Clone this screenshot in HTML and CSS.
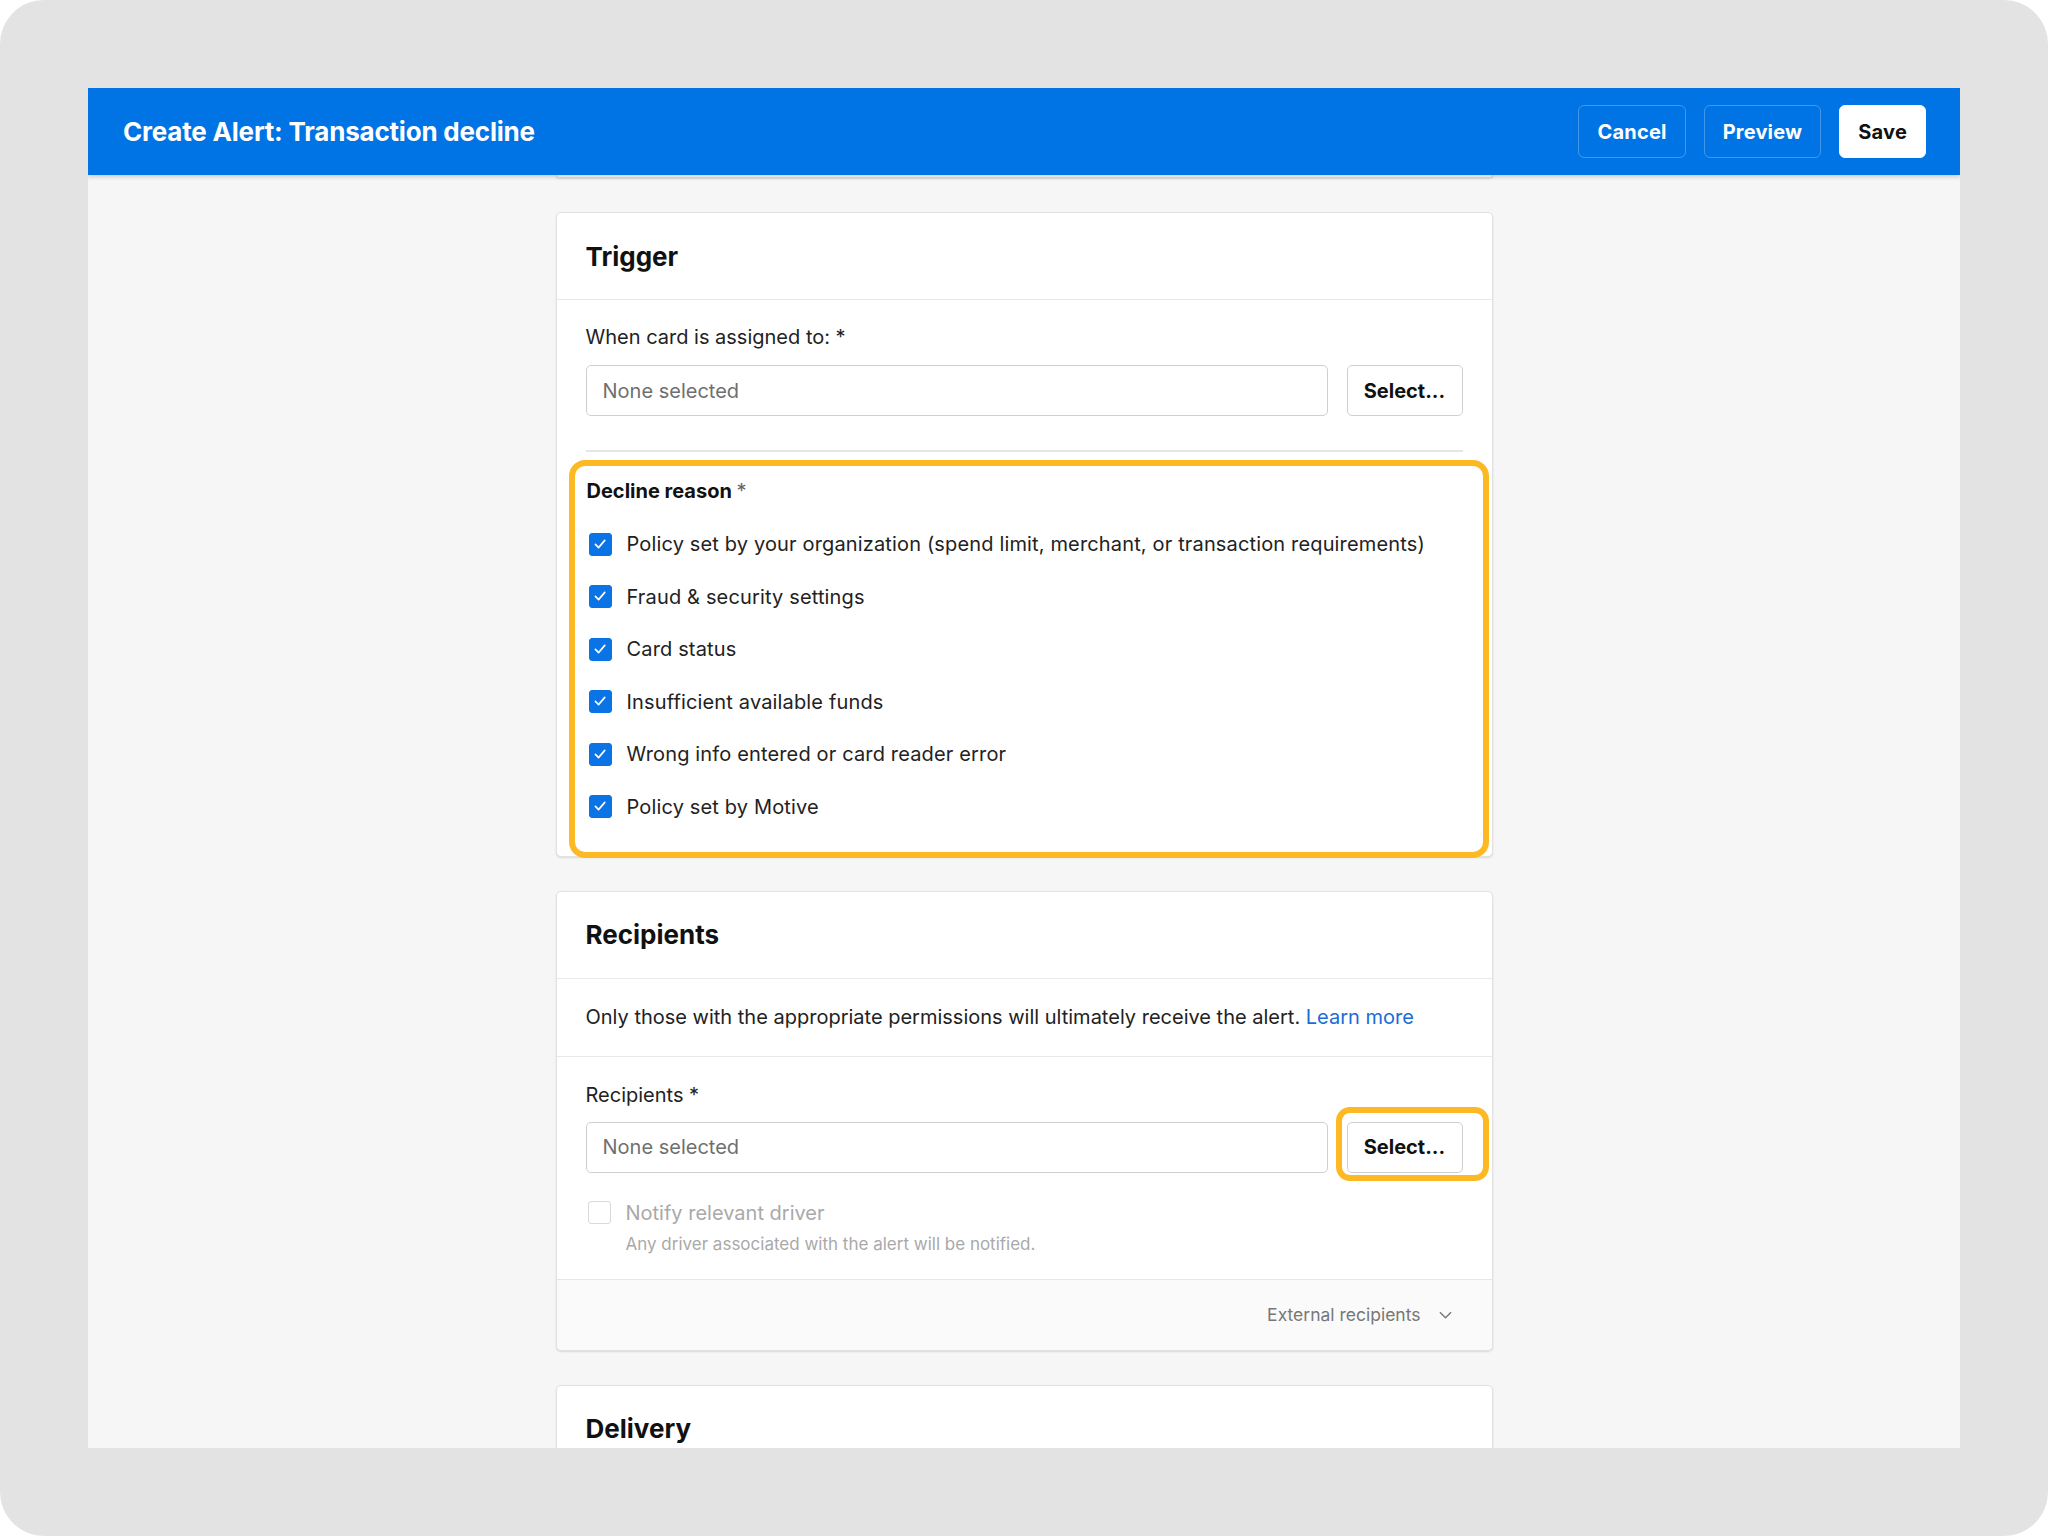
FILE: index.html
```html
<!DOCTYPE html>
<html lang="en">
<head>
    <meta charset="UTF-8">
    <title>Create Alert: Transaction decline</title>
    <link rel="stylesheet" href="styles.css">
</head>
<body>
<div class="device">
    <div class="app">
        <header class="topbar">
            <h1>Create Alert: Transaction decline</h1>
            <div class="actions">
                <button class="btn-ghost">Cancel</button>
                <button class="btn-ghost">Preview</button>
                <button class="btn-save">Save</button>
            </div>
        </header>

        <main class="content">
            <div class="cards">
                <!-- end of the section scrolled up under the top bar -->
                <div class="card-tail"></div>

                <section class="card">
                    <div class="card-head"><h2>Trigger</h2></div>
                    <div class="card-body trigger-body">
                        <label class="field-label">When card is assigned to: *</label>
                        <div class="picker">
                            <div class="picker-input">None selected</div>
                            <button class="btn-select">Select...</button>
                        </div>
                        <hr class="rule">
                        <div class="reasons">
                            <div class="reasons-title">Decline reason <span class="req">*</span></div>
                            <ul class="checks">
                                <li><span class="box checked"><svg viewBox="0 0 24 24"><path d="M6.5 12.5l3.8 3.8 7.4-8.6"/></svg></span>Policy set by your organization (spend limit, merchant, or transaction requirements)</li>
                                <li><span class="box checked"><svg viewBox="0 0 24 24"><path d="M6.5 12.5l3.8 3.8 7.4-8.6"/></svg></span>Fraud &amp; security settings</li>
                                <li><span class="box checked"><svg viewBox="0 0 24 24"><path d="M6.5 12.5l3.8 3.8 7.4-8.6"/></svg></span>Card status</li>
                                <li><span class="box checked"><svg viewBox="0 0 24 24"><path d="M6.5 12.5l3.8 3.8 7.4-8.6"/></svg></span>Insufficient available funds</li>
                                <li><span class="box checked"><svg viewBox="0 0 24 24"><path d="M6.5 12.5l3.8 3.8 7.4-8.6"/></svg></span>Wrong info entered or card reader error</li>
                                <li><span class="box checked"><svg viewBox="0 0 24 24"><path d="M6.5 12.5l3.8 3.8 7.4-8.6"/></svg></span>Policy set by Motive</li>
                            </ul>
                        </div>
                    </div>
                </section>

                <section class="card">
                    <div class="card-head"><h2>Recipients</h2></div>
                    <div class="card-note">
                        Only those with the appropriate permissions will ultimately receive the alert.&nbsp;<a href="#">Learn more</a>
                    </div>
                    <div class="card-body recipients-body">
                        <label class="field-label">Recipients *</label>
                        <div class="picker">
                            <div class="picker-input">None selected</div>
                            <div class="select-wrap">
                                <button class="btn-select">Select...</button>
                            </div>
                        </div>
                        <div class="notify">
                            <span class="box"></span>Notify relevant driver
                        </div>
                        <div class="notify-help">Any driver associated with the alert will be notified.</div>
                    </div>
                    <div class="card-foot">
                        External recipients
                        <svg class="chevron" viewBox="0 0 14 8"><path d="M1 1l6 6 6-6"/></svg>
                    </div>
                </section>

                <section class="card">
                    <div class="card-head"><h2>Delivery</h2></div>
                    <div class="card-body delivery-body"></div>
                </section>
            </div>
        </main>
    </div>
</div>
</body>
</html>
```

FILE: styles.css
```css
html {
    background: #fff;
    font-family: Inter, "Liberation Sans", sans-serif;
    color: #1f1f1f;
}

body {
    margin: 0;
}

.device {
    width: 2048px;
    height: 1536px;
    box-sizing: border-box;
    padding: 88px;
    background: #e3e3e3;
    border-radius: 44px;
}

.app {
    height: 1360px;
    display: flex;
    flex-direction: column;
    background: #f6f6f6;
    overflow: hidden;
}

/* top bar */

.topbar {
    height: 87px;
    flex: none;
    display: flex;
    align-items: center;
    justify-content: space-between;
    padding: 0 34px 0 35px;
    background: #0074e4;
    box-shadow: 0 2px 4px rgba(0, 0, 0, 0.18);
    position: relative;
    z-index: 2;
}

.topbar h1 {
    margin: 0;
    font-size: 26px;
    font-weight: 700;
    color: #fff;
    letter-spacing: -0.2px;
}

.actions {
    display: flex;
    gap: 18px;
}

.actions button {
    height: 53px;
    padding: 0 18px;
    border-radius: 6px;
    font-family: inherit;
    font-size: 20px;
    font-weight: 700;
    letter-spacing: 0.2px;
}

.btn-ghost {
    background: transparent;
    color: #fff;
    border: 1px solid rgba(255, 255, 255, 0.25);
}

.btn-save {
    background: #fff;
    color: #111;
    border: 1px solid #fff;
}

/* content */

.content {
    flex: 1;
    overflow: hidden;
}

.cards {
    width: 937px;
    margin: 0 auto;
    display: flex;
    flex-direction: column;
    gap: 34px;
}

.card-tail {
    height: 2px;
    background: #fff;
    border: 1px solid #e0e0e0;
    border-top: none;
    border-radius: 0 0 5px 5px;
    box-shadow: 0 1px 2px rgba(0, 0, 0, 0.12);
}

.card {
    background: #fff;
    border: 1px solid #e2e2e2;
    border-radius: 5px;
    box-shadow: 0 1px 2px rgba(0, 0, 0, 0.12);
}

.card-head {
    height: 86px;
    display: flex;
    align-items: center;
    padding: 0 29px;
    border-bottom: 1px solid #e9e9e9;
}

.card-head h2 {
    margin: 0;
    font-size: 26px;
    font-weight: 700;
    color: #111;
}

.card-body {
    padding: 23px 29px 24px 29px;
}

.field-label {
    display: block;
    font-size: 20px;
    line-height: 28px;
    color: #222;
    margin-bottom: 14px;
}

.picker {
    display: flex;
    gap: 19px;
}

.picker-input {
    flex: 1;
    height: 49px;
    display: flex;
    align-items: center;
    padding: 0 16px;
    border: 1px solid #cfcfcf;
    border-radius: 5px;
    font-size: 20px;
    color: #6f6f6f;
}

.btn-select {
    width: 116px;
    height: 51px;
    background: #fff;
    border: 1px solid #cfcfcf;
    border-radius: 5px;
    font-family: inherit;
    font-size: 20px;
    font-weight: 700;
    color: #111;
}

.rule {
    margin: 34px 0 0;
    border: none;
    height: 2px;
    background: #e6e6e6;
}

/* decline reasons, ringed in yellow */

.trigger-body {
    padding-bottom: 0;
}

.reasons {
    margin: 8px -26px -2px -17px;
    padding: 11px 20px 31px 12px;
    border: 6px solid #fdb924;
    border-radius: 16px;
    position: relative;
}

.reasons-title {
    font-size: 20px;
    line-height: 28px;
    font-weight: 700;
    color: #111;
}

.req {
    font-weight: 400;
    color: #666;
}

.checks {
    list-style: none;
    margin: 25px 0 0;
    padding: 0;
    display: flex;
    flex-direction: column;
    gap: 24.6px;
}

.checks li,
.notify {
    display: flex;
    align-items: center;
    font-size: 20px;
    line-height: 28px;
    color: #222;
}

.checks li {
    letter-spacing: 0.15px;
}

.box {
    width: 23px;
    height: 23px;
    box-sizing: border-box;
    margin: 0 15px 0 2px;
    border-radius: 3px;
    border: 1.5px solid #d9d9d9;
    flex: none;
}

.box.checked {
    background: #0a73e6;
    border-color: #0a73e6;
}

.box svg {
    display: block;
    width: 20px;
    height: 20px;
    fill: none;
    stroke: #fff;
    stroke-width: 2;
    stroke-linecap: round;
    stroke-linejoin: round;
}

/* recipients */

.card-note {
    height: 77px;
    display: flex;
    align-items: center;
    padding: 0 29px;
    border-bottom: 1px solid #e9e9e9;
    font-size: 20px;
    color: #222;
}

.card-note a {
    color: #1a6cd8;
    text-decoration: none;
}

.recipients-body {
    padding-top: 24px;
}

.recipients-body .field-label {
    margin-bottom: 13px;
}

.select-wrap {
    position: relative;
}

.select-wrap::after {
    content: "";
    position: absolute;
    top: -15px;
    bottom: -8px;
    left: -11px;
    right: -26px;
    border: 6px solid #fdb924;
    border-radius: 14px;
}

.notify {
    margin-top: 26px;
    color: #a9a9a9;
}

.notify-help {
    margin: 6px 0 0 40px;
    font-size: 17px;
    line-height: 22px;
    color: #a9a9a9;
}

.card-foot {
    height: 70px;
    display: flex;
    align-items: center;
    justify-content: flex-end;
    padding: 0 40px 0 30px;
    border-top: 1px solid #e6e6e6;
    border-radius: 0 0 5px 5px;
    background: #fafafa;
    font-size: 17.5px;
    color: #777;
}

.chevron {
    width: 13px;
    height: 8px;
    margin-left: 18px;
    fill: none;
    stroke: #777;
    stroke-width: 1.5;
}

.delivery-body {
    height: 200px;
}
```
